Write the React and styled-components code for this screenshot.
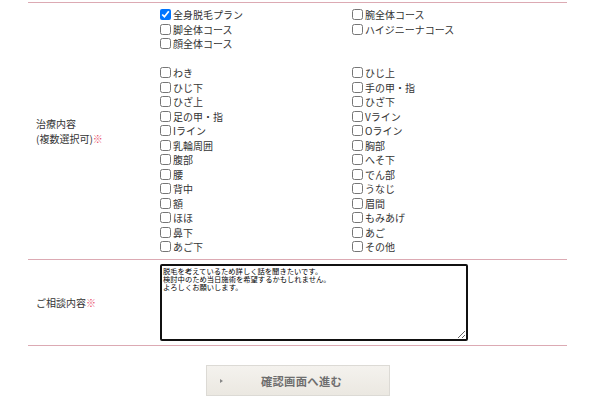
import React from "react";
import styled, { createGlobalStyle } from "styled-components";

const Global = createGlobalStyle`
  html, body { margin: 0; padding: 0; background: #fff; }
  body { font-family: "Noto Sans CJK JP", "Noto Sans", sans-serif; color: #333; }
`;

const Form = styled.div`
  width: 539px;
  margin-left: 28px;
  padding-top: 2px;
`;

const Row = styled.div`
  display: grid;
  grid-template-columns: 132px 1fr;
  border-top: 1px solid #dcaab3;
  border-bottom: ${(p) => (p.$last ? "1px solid #dcaab3" : "none")};
  padding: ${(p) => p.$pad};
`;

const Label = styled.div`
  display: flex;
  flex-direction: column;
  justify-content: center;
  padding-left: 8px;
  font-size: 10px;
  line-height: 15px;
  color: #333;
`;

const Req = styled.span`
  color: #e8506a;
`;

const Options = styled.div`
  display: flex;
  flex-direction: column;
`;

const Group = styled.div`
  display: grid;
  grid-template-columns: 192px 1fr;
  align-items: start;
`;

const Column = styled.div`
  display: flex;
  flex-direction: column;
`;

const Spacer = styled.div`
  height: 14.5px;
`;

const Item = styled.label`
  display: flex;
  align-items: center;
  height: 14.5px;
  font-size: 10px;
  color: #333;
  white-space: nowrap;
`;

const Box = styled.input`
  width: 11px;
  height: 11px;
  margin: 0 2px 0 0;
  accent-color: #0075ff;
`;

const Area = styled.textarea`
  display: block;
  box-sizing: border-box;
  width: 308px;
  height: 77px;
  margin: 0;
  padding: 1px 1px;
  border: 2px solid #111;
  border-radius: 2px;
  font-family: "Noto Sans CJK JP", sans-serif;
  font-size: 7.3px;
  line-height: 8px;
  color: #000;
  resize: both;
  outline: none;
`;

const ButtonWrap = styled.div`
  display: flex;
  justify-content: center;
  padding-top: 19px;
`;

const Button = styled.button`
  position: relative;
  width: 184px;
  height: 31px;
  border: 1px solid #dcdad5;
  background: linear-gradient(to bottom, #f4f2ee 0%, #ebe8e1 100%);
  font-family: "Noto Sans CJK JP", sans-serif;
  font-size: 11.3px;
  font-weight: bold;
  color: #6e6e6e;
  padding: 0 0 0 8px;
  letter-spacing: 0.3px;
`;

const Arrow = styled.span`
  position: absolute;
  left: 13px;
  top: 50%;
  transform: translateY(-50%);
  width: 0;
  height: 0;
  border-top: 2.5px solid transparent;
  border-bottom: 2.5px solid transparent;
  border-left: 3px solid #888;
`;

const plansL = [["全身脱毛プラン", true], ["脚全体コース"], ["顔全体コース"]];
const plansR = [["腕全体コース"], ["ハイジニーナコース"]];
const partsL = ["わき", "ひじ下", "ひざ上", "足の甲・指", "Iライン", "乳輪周囲", "腹部", "腰", "背中", "額", "ほほ", "鼻下", "あご下"];
const partsR = ["ひじ上", "手の甲・指", "ひざ下", "Vライン", "Oライン", "胸部", "へそ下", "でん部", "うなじ", "眉間", "もみあげ", "あご", "その他"];

const Check = ({ text, checked }) => (
  <Item>
    <Box type="checkbox" defaultChecked={!!checked} />
    {text}
  </Item>
);

export default function App() {
  return (
    <>
      <Global />
      <Form>
        <Row $pad="4.5px 0 5px">
          <Label>
            <span>治療内容</span>
            <span>
              (複数選択可)<Req>※</Req>
            </span>
          </Label>
          <Options>
            <Group>
              <Column>
                {plansL.map(([t, c]) => (
                  <Check key={t} text={t} checked={c} />
                ))}
              </Column>
              <Column>
                {plansR.map(([t]) => (
                  <Check key={t} text={t} />
                ))}
              </Column>
            </Group>
            <Spacer />
            <Group>
              <Column>
                {partsL.map((t) => (
                  <Check key={t} text={t} />
                ))}
              </Column>
              <Column>
                {partsR.map((t) => (
                  <Check key={t} text={t} />
                ))}
              </Column>
            </Group>
          </Options>
        </Row>
        <Row $pad="4px 0 4px" $last>
          <Label>
            <span>
              ご相談内容<Req>※</Req>
            </span>
          </Label>
          <div>
            <Area
              defaultValue={
                "脱毛を考えているため詳しく話を聞きたいです。\n検討中のため当日施術を希望するかもしれません。\nよろしくお願いします。"
              }
            />
          </div>
        </Row>
        <ButtonWrap>
          <Button type="button">
            <Arrow />
            確認画面へ進む
          </Button>
        </ButtonWrap>
      </Form>
    </>
  );
}
